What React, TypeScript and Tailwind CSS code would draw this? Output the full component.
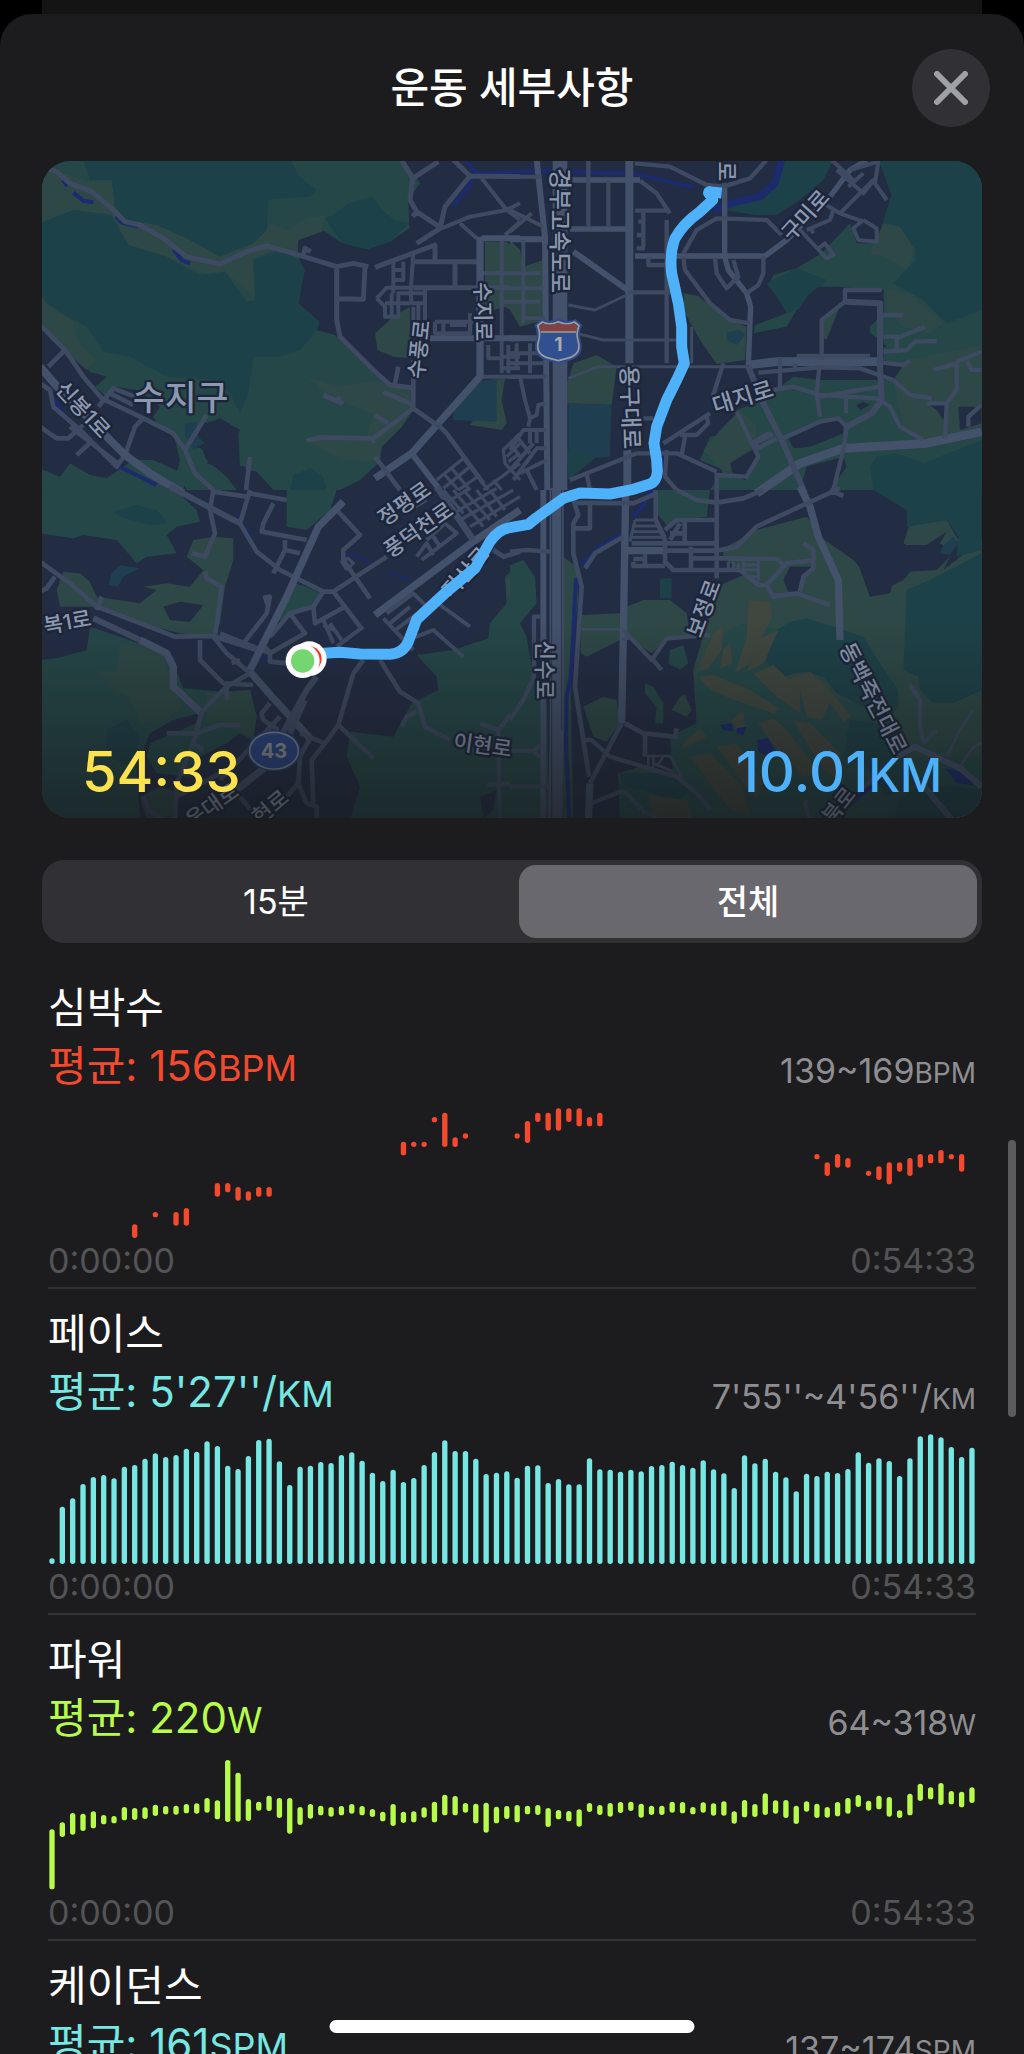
import { useState } from "react";

type Bar = [index: number, top: number, bottom: number];

const PACE_FLOOR = 792;
const PACE: Bar[] = [
  775, 620, 595, 552, 531, 525, 535, 500, 495, 476, 460, 471, 465, 446, 455, 424, 438, 497, 507, 468,
  420, 416, 484, 555, 500, 497, 486, 489, 465, 457, 482, 518, 543, 509, 546, 534, 495, 456, 421, 453,
  453, 476, 522, 518, 514, 533, 497, 496, 549, 537, 553, 553, 475, 508, 509, 515, 509, 514, 498, 495,
  485, 495, 503, 481, 508, 520, 564, 466, 490, 476, 515, 532, 574, 521, 528, 515, 519, 507, 457, 488,
  475, 483, 528, 475, 409, 403, 412, 441, 471, 443,
].map((top, i): Bar => [i, top, PACE_FLOOR]);

const POWER: Bar[] = [
  [598, 778], [577, 621], [549, 614], [551, 603], [544, 595], [555, 583], [558, 580], [531, 571], [534, 570],
  [532, 567], [524, 558], [528, 553], [527, 554], [522, 550], [520, 551], [504, 548], [511, 568], [390, 576],
  [428, 575], [507, 573], [515, 542], [497, 543], [504, 564], [504, 611], [531, 585], [522, 566], [527, 556],
  [531, 560], [528, 556], [522, 551], [528, 556], [537, 561], [545, 574], [522, 588], [545, 579], [544, 577],
  [532, 563], [515, 577], [494, 556], [498, 556], [519, 548], [521, 580], [518, 608], [530, 580], [528, 567],
  [525, 577], [527, 553], [525, 555], [534, 591], [540, 568], [543, 574], [538, 590], [519, 546], [525, 555],
  [519, 560], [516, 549], [515, 543], [521, 563], [527, 555], [527, 555], [515, 548], [516, 550], [531, 553],
  [517, 548], [520, 557], [514, 557], [544, 581], [510, 562], [522, 561], [490, 555], [511, 551], [510, 564],
  [527, 582], [514, 545], [521, 564], [531, 563], [516, 559], [504, 551], [495, 531], [512, 542], [497, 538],
  [501, 560], [541, 564], [491, 556], [461, 513], [472, 508], [459, 525], [483, 523], [485, 532], [472, 519],
].map(([top, bottom], i): Bar => [i, top, bottom]);

const HEART: Bar[] = [
  [8, 403, 444], [10, 366, 382], [12, 366, 407], [13, 354, 407], [16, 279, 320], [17, 279, 307],
  [18, 291, 332], [19, 304, 332], [20, 291, 320], [21, 291, 320], [34, 155, 196], [35, 155, 171],
  [36, 155, 171], [37, 81, 97], [38, 68, 171], [39, 142, 171], [40, 130, 146], [45, 130, 146],
  [46, 93, 159], [47, 68, 96], [48, 68, 122], [49, 55, 122], [50, 55, 96], [51, 55, 109],
  [52, 81, 109], [53, 68, 109], [74, 192, 208], [75, 217, 258], [76, 192, 233], [77, 204, 233],
  [79, 242, 258], [80, 229, 270], [81, 217, 283], [82, 217, 245], [83, 204, 258], [84, 192, 233],
  [85, 192, 220], [86, 180, 220], [87, 192, 208], [88, 192, 245],
];

function Chart({ bars, top, label }: { bars: Bar[]; top: number; label: string }) {
  return (
    <svg viewBox={`-3 ${top} 2784 396`} className="mt-3 block w-full" role="img" aria-label={label} fill="currentColor">
      {bars.map(([i, y1, y2]) => (
        <rect key={i} x={1 + i * 31.01} y={y1} width={16} height={y2 - y1} rx={8} />
      ))}
    </svg>
  );
}

type MetricProps = {
  title: string;
  value: string;
  unit: string;
  range: string;
  color: string;
  bars?: Bar[];
  top?: number;
};

function Metric({ title, value, unit, range, color, bars, top = 0 }: MetricProps) {
  return (
    <section className="border-b-2 border-[#323234] pt-4 pb-1">
      <h2 className="h-[58px] text-[42px] leading-[58px] text-white">{title}</h2>
      <div className="flex h-[58px] items-end justify-between">
        <p className={`h-[58px] text-[42px] leading-[58px] ${color}`}>
          평균: {value}
          <span className="text-[36px] leading-none">{unit}</span>
        </p>
        <p className="h-12 text-[34px] leading-12 text-[#8e8e92]">
          {range}
          <span className="text-[28px] leading-none">{unit}</span>
        </p>
      </div>
      {bars && (
        <>
          <div className={color}>
            <Chart bars={bars} top={top} label={`${title} 그래프`} />
          </div>
          <div className="flex justify-between text-[34px] leading-11 text-[#545457]">
            <span>0:00:00</span>
            <span>0:54:33</span>
          </div>
        </>
      )}
    </section>
  );
}

const MID = "#254748";
const OLIVE = "#2d4846";
const TEAL = "#1d4148";
const CITY = "#222c43";
const LAKE = "#1f3e50";
const GOLF = "#40473f";
const WATER = "#1c2a6e";

function Land({ c, p }: { c: string; p: string }) {
  return <polygon fill={c} points={p} />;
}

function Road({ w = 13, c = "#3e4a61", d }: { w?: number; c?: string; d: string }) {
  return <path d={d} fill="none" stroke={c} strokeWidth={w} strokeLinejoin="round" strokeLinecap="butt" />;
}

const MAIN = "#44516b";

function Name({ x, y, r, t, s = 64 }: { x: number; y: number; r: number; t: string; s?: number }) {
  return (
    <text
      transform={`translate(${x} ${y}) rotate(${r})`}
      fontSize={s}
      fontWeight={500}
      textAnchor="middle"
      dominantBaseline="central"
      fill="#8b98af"
      stroke="#1c2539"
      strokeWidth={14}
      strokeLinejoin="round"
      paintOrder="stroke"
    >
      {t}
    </text>
  );
}

function NorthWest() {
  return (
    <g>
      <Land c={MID} p="0,0 1090,0 1140,70 1105,120 1108,205 1050,245 980,268 905,248 852,212 775,240 772,285 792,330 775,430 838,485 830,510 885,525 1000,640 1060,680 1120,690 1120,750 1085,800 1025,860 1020,905 960,960 900,990 700,990 650,935 600,925 595,810 540,780 490,790 470,830 500,900 560,950 590,990 440,990 410,940 420,900 400,820 350,790 340,770 360,740 290,690 225,680 200,710 165,680 200,650 150,635 60,560 0,485" />
      <Land c={OLIVE} p="0,190 0,60 40,30 150,65 215,60 230,140 260,180 350,195 440,235 540,285 640,250 690,190 740,210 800,175 855,165 845,215 775,240 772,285 700,270 640,300 650,420 555,335 500,345 380,290 265,255 215,165 100,150" />
      <Land c={OLIVE} p="0,410 30,440 100,485 110,540 170,600 140,630 60,560 0,485" />
      <Land c={OLIVE} p="800,650 900,680 1000,660 1120,700 1120,750 1085,800 1025,860 1020,905 900,900 800,840 980,830 1000,760 880,720" />
      <Land c={TEAL} p="130,0 750,0 780,50 830,90 810,110 740,115 685,120 680,210 640,250 540,290 440,235 350,195 260,180 225,140 215,60 150,60" />
      <Land c={TEAL} p="0,190 100,150 215,165 265,255 380,290 480,345 555,335 620,425 645,420 640,300 720,270 775,300 795,330 775,430 835,485 830,510 780,570 720,590 640,590 625,700 600,760 570,700 520,660 380,650 270,590 190,575 140,500 100,480 20,430 0,400" />
      <Land c={TEAL} p="855,175 880,165 925,130 1000,110 1025,150 1065,180 1108,190 1050,245 980,268 905,248" />
      <Land c={TEAL} p="760,945 810,925 850,950 860,990 750,990" />
      <Land c={OLIVE} p="1335,245 1400,245 1440,280 1440,460 1390,440 1335,460" />
      <Land c={OLIVE} p="1110,440 1112,595 1060,590 1012,570 1005,520 1060,470" />
      <Land c={OLIVE} p="1310,665 1395,655 1385,720 1400,790 1385,810 1290,795 1330,740" />
      <Land c={LAKE} p="1320,665 1370,655 1370,785 1240,780 1240,745" />
      <Land c={LAKE} p="435,790 470,785 475,830 500,855 460,870 435,830" />
      <Land c={MID} p="0,925 60,950 90,910 150,945 200,955 280,900 340,900 440,945 430,990 0,990" />
      <Land c={CITY} p="490,795 540,775 600,810 590,830 540,840 580,870 520,885 560,910 615,920 630,950 560,930 500,910 520,880 470,860 520,840" />
      <Road c={WATER} w={12} d="M68,60 L82,78 M100,98 L130,122 160,127 M228,168 L245,188 295,200 M400,268 L425,300 450,310 M45,720 L80,780 M235,918 L350,975 M1275,0 L1310,40 1440,36 M1300,60 L1240,140" />
      <Road w={15} d="M0,20 L50,35 90,70 155,95 215,145 255,185 300,195 370,235 440,290 540,312 620,275 680,258 760,280 890,320 940,310 985,320 M890,320 V480 L900,530 1000,630 1050,675 1125,685 M975,320 L970,418 890,416 M790,285 L795,265 812,275 M1085,0 L1118,55 1110,120 1130,155 1205,205 M1118,170 L1130,155 M1118,55 L1195,5 M1240,0 L1290,48 1440,50 M1290,48 L1215,140 1200,205 1130,250 M1005,322 L1185,255 V300 M1120,305 H1310 M1245,305 V382 M1120,383 H1440" />
      <Road w={12} d="M1325,55 L1400,150 1440,130 M1400,150 L1440,180 M1395,225 L1440,185 M1400,150 L1290,170 1205,205 M1260,190 L1310,235 M1060,300 V400 M1120,275 L1112,400 M1090,330 H1065 M1090,305 V360 H1065 M1385,240 V640 M1325,340 H1440 M1385,425 H1440 M1155,385 V480 M1112,400 L1115,430 H1155 M1120,440 V480 M1135,430 V480 M1010,415 L1040,383 H1120 M1010,415 L1035,440 V470 H1075 V400 H1150 M1055,400 V470 M1035,430 H1110 M1185,485 V520 H1290 V460 M1210,485 V530 M1185,485 H1300 M1230,495 H1280 M1325,650 H1440 M1345,555 V595 H1380 M1405,555 V640 M1385,590 H1440 M1385,625 H1440" />
      <Road w={18} d="M1325,235 H1440 M1170,535 H1440 M1115,880 L1200,990" c={MAIN} />
      <Road w={22} c={MAIN} d="M1320,230 V650 L1235,745 1115,880 1005,955" />
      <Road w={14} d="M1190,790 L1220,820 1330,970 M1120,745 L1190,795 M1120,600 V745 L1000,835 840,832 800,842 M1000,835 V850 M1030,695 L1120,735 M1005,765 L1045,790 M850,705 L910,732 M890,725 L900,710 M1075,620 L1065,670 M1005,890 L1080,990" />
      <Road w={10} d="M1190,960 L1270,895 1345,990 M1210,985 L1290,920 M1235,925 L1290,990 M1215,945 L1255,990 M1255,990 L1320,945 M1440,820 L1390,870 1395,910 1440,960 M1400,890 L1440,850 M1405,905 L1440,880 M1330,990 L1440,910 M1360,960 L1385,990" />
      <Road w={14} d="M0,495 L75,570 130,650 185,715 300,770 400,820 435,870 465,940 520,990 M75,570 L25,620 M310,775 L285,800 255,885 230,920 120,810 40,740 30,690 0,670 M435,870 L500,765 M630,890 L618,990 M175,740 L220,685 285,710 M210,700 L280,735 M110,885 L160,840 M0,800 L50,835 85,835 130,795 M90,800 L240,915" />
      <Road w={24} c={MAIN} d="M0,620 L60,690 255,885 330,940 430,1000" />
    </g>
  );
}

function NorthEast() {
  return (
    <g transform="translate(1410 0)">
      <Land c={TEAL} p="820,0 970,0 940,60 870,120 800,165 740,165 640,150 650,125 740,110 790,60" />
      <Land c={MID} p="1110,0 1145,105 1115,200 1120,250 1040,250 1020,190 935,280 860,325 790,345 775,375 820,430 830,460 735,495 730,520 830,500 895,390 985,380 1120,390 1120,460 1070,510 1130,560 1050,570 1120,600 1200,620 1150,660 930,660 850,650 760,720 680,750 660,820 600,830 570,900 640,930 600,990 1440,990 1440,0" />
      <Land c={TEAL} p="1105,0 1415,0 1440,440 1310,490 1240,420 1150,370 1215,300 1215,270 1120,190 1145,105" />
      <Land c={TEAL} p="770,370 860,325 950,360 890,440 830,460 800,410" />
      <Land c={OLIVE} p="1120,190 1170,200 1215,270 1190,330 1120,290 1080,280" />
      <Land c={OLIVE} p="1130,390 1200,400 1300,490 1260,520 1180,500 1130,450" />
      <Land c={OLIVE} p="1190,600 1415,555 1415,800 1250,840 1180,800 1150,660" />
      <Land c={CITY} p="890,410 925,380 985,380 925,440 960,450 1000,410 1000,395 1120,395 1120,455 1080,470 1080,525 1120,540 1120,600 730,600 735,520 830,510" />
      <Land c={OLIVE} p="940,480 975,445 985,450 950,540 935,530" />
      <Land c={OLIVE} p="520,400 565,408 640,470 710,500 705,600 620,612 570,540 525,460" />
      <Land c={LAKE} p="650,515 690,510 705,525 680,555 650,540" />
      <Land c={OLIVE} p="0,240 30,270 40,320 100,300 105,480 30,500 0,450" />
      <Land c={OLIVE} p="172,670 190,610 260,585 320,620 305,735 172,730" />
      <Land c={LAKE} p="175,730 305,735 300,890 175,900" />
      <Land c={TEAL} p="172,870 260,890 175,960" />
      <Land c={OLIVE} p="580,870 640,800 690,750 740,800 735,860 670,900 680,930 640,935" />
      <Land c={TEAL} p="1080,920 1100,890 1160,880 1240,910 1415,840 1440,990 1090,990" />
      <Land c={CITY} p="835,835 930,790 1000,780 1000,820 900,860 850,865" />
      <Land c={CITY} p="1250,730 1315,730 1300,780 1280,750" />
      <Land c={CITY} p="1345,740 1415,740 1415,790 1350,810" />
      <Land c={CITY} p="870,990 890,920 1000,890 1010,920 960,990" />
      <Land c={CITY} p="660,910 735,865 745,900 705,960 670,945" />
      <Land c={CITY} p="1040,735 1060,725 1080,735 1050,750" />
      <Road c={WATER} w={12} d="M0,36 L170,30 M180,36 L370,40 550,82 M458,870 V940 M430,990 L410,1010" />
      <Road c={WATER} w={22} d="M610,150 L680,125 750,110 795,70 815,0" />
      <Road w={18} c={MAIN} d="M80,0 L105,230 112,990 M0,238 H105 M0,535 H100 M190,275 L355,392" />
      <Road w={44} c={MAIN} d="M150,0 V990" />
      <Road w={24} c={MAIN} d="M358,0 V610 M352,870 V990" />
      <Road w={16} c={MAIN} d="M180,60 H390 M180,207 H350 M375,288 H765 L830,240 960,110 1020,30 1070,0 M644,70 V290 L655,330 710,400 722,440 715,615" />
      <Road w={13} d="M390,62 L440,100 480,160 M235,0 V200 M295,60 V200 M355,397 H480 M470,180 V610 M375,152 H480 M400,150 V260 M385,185 H400 M380,225 H400 M380,265 H405 M415,290 V315 H470 M375,10 L480,20 590,75 640,80 720,55 770,0 M520,280 L560,210 620,175 770,180 815,225 M520,290 L525,330 600,430 660,480 720,490 M760,290 V340 L745,375 710,400 M615,295 L620,340 650,385 685,350 670,300 M640,610 L605,720" />
      <Road w={9} d="M175,435 L255,450 350,405 M200,520 L280,540 500,540 M545,500 V610 M175,655 L265,620 H715" />
      <Road w={26} c={MAIN} d="M715,615 L800,605 1120,605 M740,1000 L870,910 1000,865 1250,850 1415,815" />
      <Road w={18} d="M715,620 L760,730 820,850 885,1000 M1005,425 L1110,430 V620 L1115,720 1085,760 1010,800" />
      <Road w={13} d="M1120,608 L1180,615 1200,603 M860,588 H1080 M810,590 V680 M745,638 L930,622 1050,625 1150,660 1200,705 1265,715 M1250,730 H1310 L1340,690 V610 L1270,630 M1340,605 L1415,575 M1310,735 L1305,835 M1370,605 L1385,630 H1415 M680,755 L745,890 710,950 620,945 V990 M935,600 V480 L1005,425 V390 H1115 M1010,800 L1000,870 970,990 M1120,465 H1180 M1120,530 H1160 V565 M1160,535 L1245,500 M1120,575 L1190,570 1215,545 1280,543 M928,620 L920,700 930,770 M790,690 L850,680 930,705 1100,715 1140,740 1170,800 1240,840 M930,710 L1110,680 M820,835 L930,785 985,775 1010,800 M1008,710 V760 M855,610 V628 M460,850 L600,760 M510,825 L560,825 595,790 590,770 M525,830 L515,885 M380,880 L180,960 M230,940 L240,990 M380,880 L500,880 620,935 M470,870 L465,950 500,990 M400,775 H430 M730,850 L785,825 775,820 735,845 745,865 800,835 M1375,800 V770 L1415,735" />
      <Road w={12} d="M1020,30 L1105,5 1095,70 1130,120 M980,30 L1060,100 1100,50 M965,0 L1030,60 M1015,80 L1060,40 M940,130 L990,160 1090,60 M990,160 L1060,185 M890,210 L960,180 970,150 M900,200 L910,220 M870,210 L950,295 970,285 945,250 925,265 M1060,180 L1030,205 1045,240 1100,245 1100,205 1060,180" />
      <Road w={12} d="M0,50 H95 M0,150 L100,200 M0,215 L65,160 M0,385 H100 M0,340 H90 M0,425 H90 M40,240 V490 M40,475 H105 M0,650 H110 M0,580 H100 M0,610 H100 M20,550 V630 M60,550 V640 M30,650 L45,720 60,775 55,800 M60,775 L80,765 85,735 105,730 M0,870 L40,810 H110 M60,810 V850 M80,810 V850 M0,850 L30,890 M20,830 L60,880 M0,930 L70,850 M10,960 L80,865 H110 M30,940 L110,900 M50,930 L80,990" />
    </g>
  );
}

function SouthWest() {
  return (
    <g transform="translate(0 990)">
      <Land c={MID} p="0,-5 400,-5 470,60 480,95 410,110 380,135 410,190 320,200 290,220 230,150 130,135 100,145 0,130" />
      <Land c={TEAL} p="220,65 290,45 350,60 385,100 330,105 240,80" />
      <Land c={LAKE} p="215,250 240,225 300,235 250,260 235,290 205,285" />
      <Land c={OLIVE} p="460,150 520,140 580,145 580,210 555,290 540,400 520,440 420,430 300,400 180,350 60,350 50,300 70,245 120,250 150,275 170,320 300,340 350,300 310,290 380,280 450,290 490,240 440,200" />
      <Land c={CITY} p="370,350 420,335 490,345 450,395 390,390" />
      <Land c={MID} p="0,510 50,505 140,480 150,410 240,440 380,490 400,520 430,595 550,605 630,600 650,680 640,750 600,730 560,760 480,800 450,860 350,850 320,800 330,760 470,700 480,670 400,690 330,730 290,830 300,990 0,990" />
      <Land c={OLIVE} p="170,540 230,545 240,460 300,470 370,490 400,600 430,650 380,690 300,700 270,620 220,600" />
      <Land c={OLIVE} p="500,610 630,600 650,680 640,740 600,730 550,690 500,700" />
      <Land c={TEAL} p="200,720 260,690 300,740 280,830 200,800" />
      <Land c={MID} p="740,0 890,0 870,60 800,120 740,110" />
      <Land c={MID} p="700,400 760,280 800,290 842,310 820,350 740,385" />
      <Land c={MID} p="1440,220 1395,260 1400,340 1350,400 1345,445 1240,480 1130,495 1190,560 1195,600 1115,640 1060,740 930,725 920,800 960,890 930,990 1440,990" />
      <Land c={OLIVE} p="1440,230 1395,270 1410,340 1440,360" />
      <Land c={OLIVE} p="300,920 360,890 420,910 400,990 320,990" />
      <Land c={CITY} p="1320,920 1370,900 1360,960 1330,985" />
      <Road c={WATER} w={6} d="M600,95 L635,135 M920,190 L990,215 M1045,245 L1110,270 M660,505 L740,520 M590,70 L605,90" />
      <Road w={18} d="M390,-10 L600,100 M160,385 L300,450" />
      <Road w={14} d="M520,0 L510,60 525,130 495,200 455,190 M520,5 L620,20 M630,0 L600,100 650,185 720,240 850,305 880,305 1040,200 M630,10 L740,30 M700,40 L670,100 665,125 800,150 M735,150 V180 L700,250 M735,180 L780,190 M890,60 L960,135 910,180 910,210 990,325 M880,305 L960,410 M850,305 L820,350 750,370 690,440 M820,350 L825,400 915,350 M750,370 L795,430 690,490 675,470 M610,460 L680,370 690,320 675,322 685,350 M0,215 L90,280 170,350 405,440 520,438 M0,305 L20,295 45,260 M185,320 L170,360 M495,245 L500,265 545,290 525,440 650,480 M520,440 L560,490 630,550 M480,450 V510 L550,580 640,585 M540,430 L690,490 690,515 740,520" />
      <Road w={22} c={MAIN} d="M910,35 L835,110 740,320 630,540 M300,450 L380,490 400,530 400,590 485,670 M1005,375 L1300,155 1440,60 M630,545 L700,625 810,745 M590,900 L740,780" />
      <Road w={14} d="M630,550 L560,590 485,665 460,760 410,880 405,990 M560,590 V630 M575,520 L600,510 M780,730 L855,760 895,705 940,550 970,510 M895,705 L1000,805 M810,745 L780,800 775,880 800,940 830,950 V990 M855,760 L815,810 820,950 M1020,510 L1080,605 1135,640 1155,710 1230,750 M1130,665 L1100,680 1085,710 M380,730 H470 L540,705 600,705 M690,640 L665,670 670,690 715,720 M460,760 L490,780 M410,920 L540,850 M540,870 L720,680 M310,920 L325,960 370,990 M600,920 L640,970 M775,880 L740,920 M1375,720 L1380,990 M1375,720 L1320,700 M1375,720 L1440,640 M1340,885 L1440,880 M1360,180 L1390,200 1440,185" />
      <Road w={18} d="M730,725 L800,600 830,560 M750,730 L795,630" />
      <Road w={12} d="M1060,425 L1160,350 1120,310 1040,370 M1030,385 L1120,480 M1050,400 L1110,350 M1100,430 L1130,440 1180,420 1270,500 M1180,330 L1290,410 M890,470 L970,410 M850,390 L880,460 M870,400 L905,450 M880,420 L850,405 M1130,200 L1160,160 1180,195 M1145,210 L1250,130 1215,100 1160,150 M1200,170 L1180,140" />
      <Road w={20} d="M1300,150 L1190,-10" />
      <Road w={10} d="M1210,0 L1270,70 M1240,0 L1330,110 M1270,0 L1350,90 M1310,0 L1370,80 M1215,40 L1290,-5 M1240,70 L1370,-5 M1260,90 L1420,0 M1290,110 L1440,20 M1350,0 L1395,60 M1110,60 L1160,30" />
      <path d="M920,240 L940,220 925,205 905,215 920,240" fill="none" stroke="#3e4a61" strokeWidth={9} />
    </g>
  );
}

function SouthEast() {
  return (
    <g transform="translate(1410 990)">
      <Land c={MID} p="0,225 40,210 75,260 80,340 30,400 50,440 70,560 110,640 120,990 0,990" />
      <Land c={OLIVE} p="160,200 200,230 205,330 180,500 190,990 150,990" />
      <Land c={MID} p="445,0 600,0 590,80 500,90 470,105 440,70" />
      <Land c={TEAL} p="450,265 485,265 485,325 450,325" />
      <Land c={OLIVE} p="640,175 740,120 890,80 930,130 1040,210 1080,320 1180,270 1240,200 1180,160 1200,100 1310,90 1345,150 1300,240 1415,150 1415,990 330,990 325,850 390,830 490,850 480,740 560,700 550,540 590,400 620,290 700,255 640,200" />
      <Land c={MID} p="560,560 620,440 700,400 800,420 760,520 860,600 1040,640 1180,800 1415,800 1415,990 330,990 325,850 490,850 480,740 560,700" />
      <Land c={TEAL} p="1090,0 1415,0 1415,180 1340,200 1345,140 1310,90 1190,110 1190,60" />
      <Land c={CITY} p="940,30 1060,20 1190,70 1180,165 1250,165 1310,125 1290,160 1330,190 1280,240 1190,245 1150,270 1140,310 1080,320 1100,290 1030,210 930,140" />
      <Land c={LAKE} p="1300,165 1330,140 1345,160 1320,195 1290,190" />
      <Land c={TEAL} p="765,520 800,420 840,395 890,385 1000,420 1060,440 1110,520 1165,600 1165,650 1130,690 1040,640 980,610 940,560 880,545 820,560" />
      <Land c={TEAL} p="1190,300 1260,270 1415,190 1415,600 1330,640 1270,640 1230,600 1225,560 1180,540" />
      <Land c={TEAL} p="1020,690 1100,700 1180,790 1240,870 1130,920 1060,820 1000,800" />
      <Land c={TEAL} p="1170,930 1240,880 1415,900 1415,990 1150,990" />
      <Land c={TEAL} p="330,850 490,850 540,900 500,940 400,900 340,890" />
      <Land c={OLIVE} p="215,375 330,370 330,450 230,500 212,490" />
      <Land c={OLIVE} p="350,350 400,330 480,330 530,370 540,440 460,455 425,490 350,440" />
      <Land c={OLIVE} p="220,650 280,620 320,630 330,700 290,755 250,740" />
      <Land c={MID} p="405,580 430,590 460,640 460,700 435,700 440,650 405,610" />
      <Land c={MID} p="480,480 520,465 535,520 510,540 475,520" />
      <Land c={CITY} p="470,600 520,600 550,620 555,690 480,700" />
      <Land c={OLIVE} p="510,620 525,615 545,660 530,680 485,660" />
      <Land c={CITY} p="820,270 840,230 905,230 880,260 865,310 835,305" />
      <Land c={GOLF} p="715,330 780,335 787,380 740,470 720,520 675,550 710,440" />
      <Land c={GOLF} p="610,430 640,410 635,480 590,540 565,540" />
      <Land c={GOLF} p="660,455 668,520 630,535 640,480" />
      <Land c={GOLF} p="805,420 760,520 710,545 750,445" />
      <Land c={GOLF} p="565,560 610,555 720,600 805,655 795,672 660,625 600,600" />
      <Land c={GOLF} p="730,550 790,525 870,600 870,670 800,620" />
      <Land c={GOLF} p="830,570 900,545 950,590 1025,680 1000,695 960,640 935,690 890,680 870,600" />
      <Land c={GOLF} p="745,700 790,685 830,720 930,850 880,860 800,780" />
      <Land c={GOLF} p="850,690 900,700 990,790 1000,880 940,840" />
      <Land c={GOLF} p="540,800 600,790 690,880 720,970 660,960 600,880" />
      <Land c={GOLF} p="620,770 680,760 760,880 740,930 700,880" />
      <Land c={GOLF} p="415,915 530,930 550,990 430,990" />
      <Land c={GOLF} p="570,715 590,740 510,780 530,750" />
      <Land c={GOLF} p="665,690 700,660 705,710 680,720" />
      <Land c={WATER} p="630,705 665,700 670,725 640,720" />
      <Land c={WATER} p="680,715 710,710 700,735 680,730" />
      <Land c={WATER} p="742,750 775,745 800,790 790,805 745,785" />
      <Land c={WATER} p="1305,835 1350,845 1390,860 1390,885 1340,880" />
      <Road c={WATER} w={12} d="M198,265 L190,430 182,560 170,620 168,760 178,990 M410,35 L370,80 M340,130 L270,170 215,225 M1010,950 L1110,870" />
      <Road w={42} c={MAIN} d="M140,-5 V730 L135,990" />
      <Road w={3} c="#28334a" d="M125,0 V990 M155,0 V720" />
      <Road w={18} c={MAIN} d="M100,0 V990" />
      <Road w={22} c={MAIN} d="M347,0 L340,440 335,700 M240,880 L235,990 M870,-10 L900,50 925,140 985,270 990,450 M345,182 H470" />
      <Road w={14} d="M180,0 L205,75 190,100 190,190 215,290 195,590 237,860 M335,700 L240,880 M345,700 L400,730 495,740 500,715 M405,730 V800 M195,115 H240 V40 M195,38 L370,40 440,10 M437,0 V90 L465,150 V215 L490,240 H690 M365,160 H620 M465,182 H620 M620,0 V265 M465,120 L500,90 H615 M524,90 V155 M480,130 H520 M480,150 L510,100 M370,215 V228 H465 M370,207 H400 M405,190 V235 M543,170 V240 M545,205 H640 L800,207 M620,182 L680,170 740,110 880,45 990,-5 M500,0 L560,30 620,38 700,25 760,0 M960,0 L1000,18 M690,240 L745,285 770,285 830,220 910,210 V180 L880,160 M800,205 L820,225 M770,285 L790,320 860,310 960,345 M870,305 L880,260 910,235 V200 M225,235 L255,190 340,140" />
      <Road w={9} d="M375,90 H440 L465,140 M375,90 L360,155 M370,108 H445 M365,125 H455 M362,142 H460 M745,205 V275 M700,215 V245 M685,220 V240 M655,215 V240 M670,215 V240 M700,225 H745 M700,240 H745 M715,260 H745" />
      <Road w={13} d="M340,420 L425,510 470,445 600,435 M340,450 L360,440 M425,505 L455,540 M0,185 L50,180 120,185 M90,380 H72 V560 L40,630 0,690 M0,783 H70 L90,765 M70,783 L90,800 M0,890 H120 M225,750 H245 L300,800 500,860 570,920 600,960 M245,940 L330,905 350,910 400,965 460,990 M1200,585 L1230,630 V710 L1240,760 M1280,720 L1240,760 M890,930 L885,945 900,990 M1050,900 L1120,840" />
      <Road w={8} d="M215,418 H330 M410,798 H480 L515,860 415,840 V798 M430,800 V840 M430,820 L490,845 M460,800 L440,830 M1310,800 L1350,720 1390,660 M1350,830 L1390,770 1415,760" />
      <Road w={18} c={MAIN} d="M1160,800 L1215,770 1350,835 1415,890 M1235,880 L1330,995" />
    </g>
  );
}

function RouteMap() {
  return (
    <svg
      viewBox="6 3 2820 1971"
      preserveAspectRatio="xMidYMid slice"
      className="block h-full w-full"
      role="img"
      aria-label="운동 경로 지도"
    >
      <defs>
        <linearGradient id="fade" x1="0" y1="0" x2="0" y2="1">
          <stop offset="0.7" stopColor="#16191c" stopOpacity="0" />
          <stop offset="1" stopColor="#16191c" stopOpacity="0.65" />
        </linearGradient>
      </defs>
      <rect width="2850" height="1980" fill={CITY} />
      <NorthWest />
      <NorthEast />
      <SouthWest />
      <SouthEast />

      <Name x={422} y={712} r={0} t="수지구" s={104} />
      <Name x={130} y={748} r={47} t="신봉1로" />
      <Name x={1136} y={568} r={-84} t="수풍로" />
      <Name x={1330} y={455} r={89} t="수지로" />
      <Name x={1560} y={212} r={90} t="경부고속도로" s={68} />
      <Name x={2062} y={34} r={90} t="로" />
      <Name x={2295} y={165} r={-48} t="구미로" />
      <Name x={1772} y={742} r={88} t="용구대로" s={68} />
      <Name x={2108} y={710} r={-17} t="대지로" s={68} />
      <Name x={1092} y={1030} r={-35} t="정평로" />
      <Name x={1134} y={1108} r={-35} t="풍덕천로" />
      <Name x={1275} y={1236} r={-48} t="지산로" />
      <Name x={82} y={1385} r={-10} t="복1로" />
      <Name x={1328} y={1755} r={8} t="이현로" />
      <Name x={1515} y={1530} r={90} t="신수로" />
      <Name x={1990} y={1345} r={-70} t="보정로" />
      <Name x={2500} y={1615} r={63} t="동백죽전대로" s={66} />
      <Name x={2395} y={1935} r={-52} t="북로" />
      <Name x={515} y={1935} r={-35} t="운대로" />
      <Name x={690} y={1940} r={-40} t="현로" />

      <g transform="translate(1555 543)" strokeLinejoin="round">
        <path
          d="M-52,-66 Q-28,-54 0,-68 Q28,-54 52,-66 L72,-48 Q60,-24 68,0 Q80,48 30,60 L0,68 L-30,60 Q-80,48 -68,0 Q-60,-24 -72,-48 Z"
          fill="#304a86"
        />
        <path
          d="M-48,-57 Q-26,-46 0,-58 Q26,-46 48,-57 L62,-46 Q52,-22 60,2 Q70,42 26,52 L0,59 L-26,52 Q-70,42 -60,2 Q-52,-22 -62,-46 Z"
          fill="#30508f"
          stroke="#9a9c9e"
          strokeWidth={5}
        />
        <path d="M-46,-53 Q-26,-42 0,-54 Q26,-42 46,-53 L58,-45 L53,-28 H-53 L-58,-45 Z" fill="#83423f" />
        <path d="M-53,-27 H53" stroke="#9a9c9e" strokeWidth={4} />
        <text y={30} fontSize={58} fontWeight={700} textAnchor="middle" fill="#a9aba9">1</text>
      </g>
      <g transform="translate(702 1772)">
        <ellipse rx={80} ry={62} fill="#263f7a" />
        <ellipse rx={73} ry={55} fill="#2a4587" stroke="#80888f" strokeWidth={5} />
        <text y={22} fontSize={60} fontWeight={700} textAnchor="middle" fill="#949899">43</text>
      </g>

      <rect width="2850" height="1980" fill="url(#fade)" />

      <path
        d="M2045,99 L2010,96 2018,120 1980,155 Q1930,190 1905,235 Q1888,280 1895,340 L1915,430 1925,500 1925,560 1933,610 1910,660 1880,720 1850,800 1842,850 1850,900 1852,935 Q1850,965 1830,972 L1780,988 1710,1002 1620,999 1570,1015 1490,1073 1465,1093 1410,1103 Q1375,1108 1350,1145 L1305,1225 1270,1253 1220,1295 1130,1378 1105,1445 Q1090,1480 1050,1483 L960,1482 900,1477 850,1480"
        fill="none"
        stroke="#4eb1fa"
        strokeWidth={33}
        strokeLinejoin="round"
      />
      <circle cx={2008} cy={98} r={19} fill="#4eb1fa" />
      <circle cx={808} cy={1496} r={52} fill="#fff" />
      <circle cx={808} cy={1496} r={37} fill="#ef3b2f" />
      <circle cx={788} cy={1503} r={51} fill="#fff" />
      <circle cx={788} cy={1503} r={35} fill="#74d66f" />
    </svg>
  );
}

const SPANS = ["15분", "전체"];

export default function App() {
  const [span, setSpan] = useState("전체");
  return (
    <div className="relative flex h-screen flex-col overflow-hidden bg-black font-['Inter','Noto_Sans_CJK_KR',sans-serif]">
      <div className="mx-[42px] h-[14px] shrink-0 bg-[#141415]" />
      <main className="min-h-0 grow overflow-y-auto rounded-t-[32px] bg-[#1c1c1e] [scrollbar-width:none]">
        <header className="grid grid-cols-[1fr_auto_1fr] items-center px-[34px] pt-[35px] pb-[34px]">
          <h1 className="col-start-2 text-[42px] leading-[60px] font-medium text-white">운동 세부사항</h1>
          <button
            type="button"
            aria-label="닫기"
            className="flex size-[78px] items-center justify-center justify-self-end rounded-full bg-[#313135]"
          >
            <svg viewBox="0 0 34 34" className="size-[34px]" stroke="#a0a0a7" strokeWidth={6} strokeLinecap="round">
              <path d="M3,3 L31,31 M31,3 L3,31" />
            </svg>
          </button>
        </header>

        <div className="relative mx-[42px] aspect-[940/657] overflow-hidden rounded-[28px]">
          <RouteMap />
          <div className="absolute inset-x-10 bottom-3 flex items-baseline justify-between text-[56px] leading-[68px] font-medium">
            <span className="text-[#fbe24e]">54:33</span>
            <span className="text-[#4eb1fa]">
              10.01<span className="text-[46px] leading-none">KM</span>
            </span>
          </div>
        </div>

        <div className="mx-[42px] mt-[42px] flex gap-[14px] rounded-[22px] bg-[#313135] p-[5px]">
          {SPANS.map((s) => (
            <button
              key={s}
              type="button"
              aria-pressed={s === span}
              onClick={() => setSpan(s)}
              className={`h-[73px] flex-1 rounded-[17px] text-[34px] text-white ${s === span ? "bg-[#69686e] font-medium" : ""}`}
            >
              {s}
            </button>
          ))}
        </div>

        <div className="mx-12 mt-5">
          <Metric title="심박수" value="156" unit="BPM" range="139~169" color="text-[#f5492d]" bars={HEART} top={51} />
          <Metric title="페이스" value="5'27''/" unit="KM" range="7'55''~4'56''/" color="text-[#76e7e2]" bars={PACE} top={399} />
          <Metric title="파워" value="220" unit="W" range="64~318" color="text-[#b8fc4b]" bars={POWER} top={387} />
          <Metric title="케이던스" value="161" unit="SPM" range="137~174" color="text-[#76e7e2]" />
        </div>
      </main>
      <div className="absolute top-[1140px] right-2 h-[277px] w-2 rounded-full bg-[#5b5b5d]" />
      <div className="absolute bottom-[21px] left-1/2 h-[13px] w-[365px] -translate-x-1/2 rounded-full bg-white" />
    </div>
  );
}
